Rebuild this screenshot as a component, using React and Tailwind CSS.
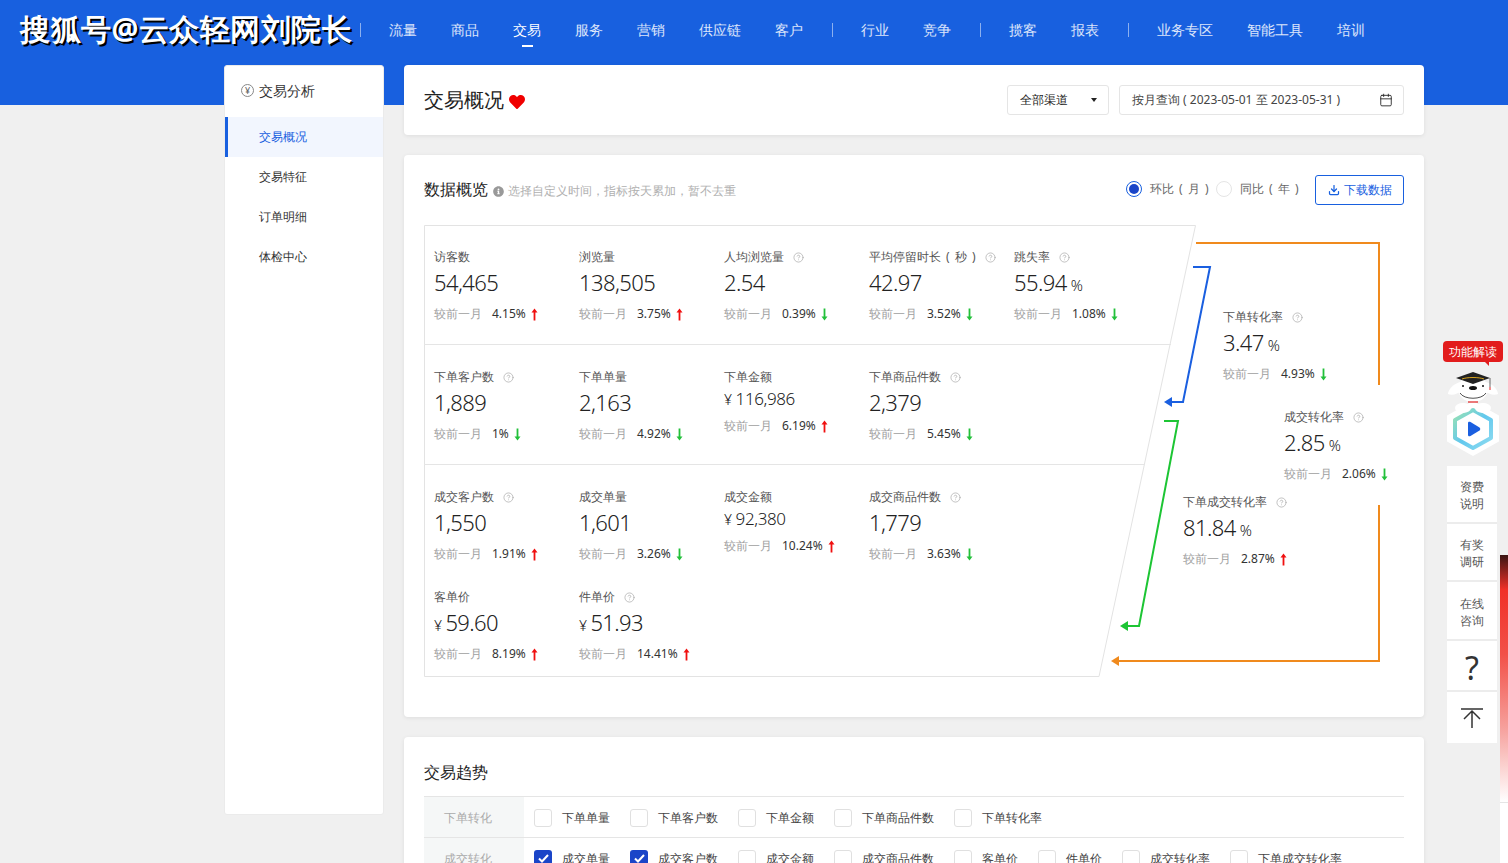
import React from "react";
import { Calendar, CircleHelp, Download } from "lucide-react";
import { FaHeart, FaInfoCircle } from "react-icons/fa";

const navGroups = [
  ["流量", "商品", "交易", "服务", "营销", "供应链", "客户"],
  ["行业", "竞争"],
  ["揽客", "报表"],
  ["业务专区", "智能工具", "培训"],
];

const UP = "up";
const DOWN = "down";

const rows = [
  {
    width: "w-[747px] border-b border-[#e5e5e5]",
    items: [
      { label: "访客数", value: "54,465", pct: "4.15%", dir: UP },
      { label: "浏览量", value: "138,505", pct: "3.75%", dir: UP },
      { label: "人均浏览量", help: true, value: "2.54", pct: "0.39%", dir: DOWN },
      { label: "平均停留时长 ( 秒 )", help: true, value: "42.97", pct: "3.52%", dir: DOWN },
      { label: "跳失率", help: true, value: "55.94", unit: "%", pct: "1.08%", dir: DOWN },
    ],
  },
  {
    width: "w-[721px] border-b border-[#e5e5e5]",
    items: [
      { label: "下单客户数", help: true, value: "1,889", pct: "1%", dir: DOWN },
      { label: "下单单量", value: "2,163", pct: "4.92%", dir: DOWN },
      { label: "下单金额", money: true, value: "116,986", pct: "6.19%", dir: UP },
      { label: "下单商品件数", help: true, value: "2,379", pct: "5.45%", dir: DOWN },
    ],
  },
  {
    width: "w-[700px]",
    items: [
      { label: "成交客户数", help: true, value: "1,550", pct: "1.91%", dir: UP },
      { label: "成交单量", value: "1,601", pct: "3.26%", dir: DOWN },
      { label: "成交金额", money: true, value: "92,380", pct: "10.24%", dir: UP },
      { label: "成交商品件数", help: true, value: "1,779", pct: "3.63%", dir: DOWN },
    ],
  },
  {
    width: "w-[600px]",
    items: [
      { label: "客单价", prefix: "¥", value: "59.60", pct: "8.19%", dir: UP },
      { label: "件单价", help: true, prefix: "¥", value: "51.93", pct: "14.41%", dir: UP },
    ],
  },
];

const checkRows = [
  {
    name: "下单转化",
    items: [
      { t: "下单单量" },
      { t: "下单客户数" },
      { t: "下单金额" },
      { t: "下单商品件数" },
      { t: "下单转化率" },
    ],
  },
  {
    name: "成交转化",
    items: [
      { t: "成交单量", on: true },
      { t: "成交客户数", on: true },
      { t: "成交金额" },
      { t: "成交商品件数" },
      { t: "客单价" },
      { t: "件单价" },
      { t: "成交转化率" },
      { t: "下单成交转化率" },
    ],
  },
];

const Arrow = ({ dir }) => (
  <svg width="7" height="13" viewBox="0 0 7 13" className="ml-[5px] shrink-0">
    {dir === UP ? (
      <path d="M3.5 0.5 L6.5 4.5 H4.4 V12.5 H2.6 V4.5 H0.5 Z" fill="#f01010" />
    ) : (
      <path d="M3.5 12.5 L6.5 8.5 H4.4 V0.5 H2.6 V8.5 H0.5 Z" fill="#22c03a" />
    )}
  </svg>
);

const Help = () => <CircleHelp size={11} strokeWidth={1.5} className="ml-[9px] text-[#a8a8a8]" />;

const Compare = ({ pct, dir, className = "" }) => (
  <div className={`flex h-[18px] items-center text-[12px] ${className}`}>
    <span className="text-[#a0a0a0]">较前一月</span>
    <span className="ml-[10px] text-[#333]">{pct}</span>
    <Arrow dir={dir} />
  </div>
);

const Metric = ({ m }) => (
  <div className="w-[145px] shrink-0">
    <div className="flex h-[18px] items-center whitespace-pre text-[12px] text-[#555] [word-spacing:2px]">
      {m.label}
      {m.help && <Help />}
    </div>
    {m.money ? (
      <>
        <div className="h-[26px] text-[17px] font-light leading-[26px] tracking-[-0.4px] text-[#222]">
          <span className="mr-[4px] text-[14px]">¥</span>
          {m.value}
        </div>
        <Compare pct={m.pct} dir={m.dir} className="mt-[5px]" />
      </>
    ) : (
      <>
        <div className="mt-[1px] h-[30px] text-[22px] font-light leading-[30px] tracking-[-0.6px] text-[#222]">
          {m.prefix && <span className="mr-[4px] text-[14px]">{m.prefix}</span>}
          {m.value}
          {m.unit && <span className="ml-[4px] text-[15px]">{m.unit}</span>}
        </div>
        <Compare pct={m.pct} dir={m.dir} className="mt-[8px]" />
      </>
    )}
  </div>
);

const Rate = ({ className, label, value, pct, dir }) => (
  <div className={`absolute bg-white ${className}`}>
    <div className="flex h-[18px] items-center text-[12px] text-[#555]">
      {label}
      <Help />
    </div>
    <div className="mt-[1px] h-[30px] text-[22px] font-light leading-[30px] tracking-[-0.6px] text-[#222]">
      {value}
      <span className="ml-[4px] text-[15px]">%</span>
    </div>
    <Compare pct={pct} dir={dir} className="mt-[8px]" />
  </div>
);

// outline of the funnel and the three conversion arrows
const FunnelLines = () => (
  <svg className="absolute left-0 top-0 overflow-visible" width="980" height="452" fill="none">
    <path d="M0.5 0.5 H771.5 L675 451.5 H0.5 Z" stroke="#e3e3e3" />
    <path d="M772 18 H955 V160 M955 280 V436 H694" stroke="#f08a1d" strokeWidth="2" />
    <path d="M687 436 L695 431 V441 Z" fill="#f08a1d" />
    <path d="M769 42 H786 L759 177 H746" stroke="#1a5fe0" strokeWidth="2" />
    <path d="M740 177 L748 172 V182 Z" fill="#1a5fe0" />
    <path d="M740 196 H754 L715 401 H703" stroke="#1dc534" strokeWidth="2" />
    <path d="M696 401 L704 396 V406 Z" fill="#1dc534" />
  </svg>
);

const Mascot = () => (
  <svg width="60" height="86" viewBox="0 0 60 86">
    <defs>
      <linearGradient id="hexBorder" x1="0" y1="0" x2="1" y2="1">
        <stop offset="0" stopColor="#9be3b0" />
        <stop offset="0.5" stopColor="#62c8ee" />
        <stop offset="1" stopColor="#8fdcf0" />
      </linearGradient>
    </defs>
    <path d="M30 31 L55 45 V70 L30 84 L5 70 V45 Z" fill="#fff" stroke="#fff" strokeWidth="2" strokeLinejoin="round" />
    <path d="M30 39 L48 49 V67 L30 77 L12 67 V49 Z" fill="#fff" stroke="url(#hexBorder)" strokeWidth="4" strokeLinejoin="round" />
    <path d="M25 52 C25 50.5 26.5 50.5 27.5 51 L36.5 56.5 C37.5 57.5 37.5 58.5 36.5 59.5 L27.5 65 C26.5 65.5 25 65.5 25 64 Z" fill="#1a5fe0" />
    <path d="M17 11 C10 13 5 19 5 23 C9 25 15 23 19 19 Z" fill="#fff" />
    <path d="M43 11 C50 13 55 19 55 23 C51 25 45 23 41 19 Z" fill="#fff" />
    <ellipse cx="30" cy="18" rx="15" ry="13" fill="#fff" />
    <path d="M17 22 C21 29 39 29 43 22" stroke="#222" strokeWidth="0.8" fill="none" />
    <ellipse cx="30" cy="17" rx="4" ry="2" fill="#111" />
    <circle cx="20" cy="15" r="1" fill="#111" />
    <circle cx="40" cy="15" r="1" fill="#111" />
    <path d="M25 31 H35" stroke="#e02020" strokeWidth="1.2" />
    <path d="M30 1 L47 7 L30 13 L13 7 Z" fill="#222" />
    <path d="M19 8 C24 6 36 6 41 8" stroke="#d9a520" strokeWidth="1" fill="none" />
    <path d="M47 7 V16" stroke="#444" strokeWidth="0.8" />
    <path d="M46.5 16 H47.5 V19 H46.5 Z" fill="#e02020" />
    <ellipse cx="20" cy="37" rx="8" ry="5" fill="#fff" />
    <ellipse cx="40" cy="37" rx="8" ry="5" fill="#fff" />
  </svg>
);

export default function App() {
  return (
    <div className="relative h-[863px] w-[1508px] overflow-hidden bg-[#f0f0f0] font-['Noto_Sans_CJK_SC',sans-serif]">
      {/* header */}
      <div className="relative h-[105px] bg-[#1860df]">
        <div className="flex h-[59px] items-center pl-[360px] text-[14px] text-white/85">
          {navGroups.map((group, i) => (
            <React.Fragment key={i}>
              <span className="mr-[28px] h-[14px] w-px bg-white/50" />
              <div className="mr-[29px] flex gap-[34px]">
                {group.map((item) => (
                  <span key={item} className={`relative ${item === "交易" ? "font-medium text-white" : ""}`}>
                    {item}
                    {item === "交易" && (
                      <span className="absolute -bottom-[7px] left-[9px] h-[2px] w-[11px] bg-white" />
                    )}
                  </span>
                ))}
              </div>
            </React.Fragment>
          ))}
        </div>
        <div className="absolute left-[20px] top-[7px] whitespace-nowrap text-[30px] font-bold leading-[44px] tracking-[0.5px] text-white [text-shadow:2px_2px_0_#000]">
          搜狐号@云众轻网刘院长
        </div>
      </div>

      {/* page body */}
      <div className="relative -mt-[40px] ml-[224px] flex w-[1200px] gap-[20px]">
        <aside className="h-[750px] w-[160px] shrink-0 rounded-[3px] border border-[#ebebeb] bg-white">
          <div className="flex h-[51px] items-center pb-[2px] pl-[16px] text-[14px] text-[#333]">
            <span className="mr-[5px] flex h-[13px] w-[13px] items-center justify-center rounded-full border border-[#888] text-[9px] leading-none text-[#666]">
              ¥
            </span>
            交易分析
          </div>
          <div className="flex h-[40px] items-center border-l-[3px] border-[#1860df] bg-[#f2f6fe] pl-[31px] text-[12px] text-[#1860df]">
            交易概况
          </div>
          {["交易特征", "订单明细", "体检中心"].map((item) => (
            <div key={item} className="flex h-[40px] items-center pl-[34px] text-[12px] text-[#333]">
              {item}
            </div>
          ))}
        </aside>

        <main className="w-[1020px] shrink-0">
          {/* title card */}
          <div className="flex h-[70px] items-center rounded-[4px] bg-white px-[20px] shadow-[0_1px_4px_rgba(0,0,0,0.08)]">
            <h1 className="text-[20px] font-light text-[#222]">交易概况</h1>
            <FaHeart size={16} className="ml-[5px] mt-[3px] text-[#f00000]" />
            <div className="ml-auto flex h-[30px] w-[102px] items-center rounded-[3px] border border-[#e5e5e5] pl-[12px] pr-[11px] text-[12px] text-[#222]">
              全部渠道
              <span className="ml-auto h-0 w-0 border-x-[3.5px] border-t-[4px] border-x-transparent border-t-[#222]" />
            </div>
            <div className="ml-[10px] flex h-[30px] w-[285px] items-center whitespace-pre rounded-[3px] border border-[#e5e5e5] pl-[12px] pr-[10px] text-[12px] text-[#444]">
              按月查询 ( 2023-05-01 至 2023-05-31 )
              <Calendar size={14} strokeWidth={1.5} className="ml-auto text-[#222]" />
            </div>
          </div>

          {/* overview card */}
          <div className="mt-[20px] h-[562px] rounded-[4px] bg-white px-[20px] pt-[20px] shadow-[0_1px_4px_rgba(0,0,0,0.08)]">
            <div className="flex h-[30px] items-center">
              <h2 className="pb-[3px] text-[16px] font-light text-[#222]">数据概览</h2>
              <FaInfoCircle size={11} className="ml-[5px] mt-[2px] text-[#999]" />
              <span className="ml-[4px] mt-[2px] text-[12px] text-[#b0b0b0]">选择自定义时间，指标按天累加，暂不去重</span>
              <span className="mb-[2px] ml-auto flex h-[16px] w-[16px] items-center justify-center rounded-full border border-[#1860df]">
                <span className="h-[10px] w-[10px] rounded-full bg-[#1a45c8]" />
              </span>
              <span className="mb-[2px] ml-[8px] w-[57px] whitespace-pre text-[12px] text-[#666] [word-spacing:2px]">环比 ( 月 )</span>
              <span className="mb-[2px] ml-[9px] h-[16px] w-[16px] rounded-full border border-[#e5e5e5]" />
              <span className="mb-[2px] ml-[8px] w-[57px] whitespace-pre text-[12px] text-[#666] [word-spacing:2px]">同比 ( 年 )</span>
              <button className="ml-[18px] flex h-[30px] w-[89px] items-center justify-center rounded-[3px] border border-[#1860df] text-[12px] text-[#1860df]">
                <Download size={12} strokeWidth={2.5} className="mr-[4px]" />
                下载数据
              </button>
            </div>

            <div className="relative mt-[20px] h-[452px]">
              <FunnelLines />
              {rows.map((row, i) => (
                <div key={i} className={`relative flex pl-[10px] pt-[23px] ${row.width} ${i === 2 ? "h-[100px]" : i === 3 ? "h-[112px]" : "h-[120px]"}`}>
                  {row.items.map((m) => (
                    <Metric key={m.label} m={m} />
                  ))}
                </div>
              ))}
              <Rate className="left-[799px] top-[83px] pr-[8px]" label="下单转化率" value="3.47" pct="4.93%" dir={DOWN} />
              <Rate className="left-[860px] top-[183px] w-[120px]" label="成交转化率" value="2.85" pct="2.06%" dir={DOWN} />
              <Rate className="left-[759px] top-[268px]" label="下单成交转化率" value="81.84" pct="2.87%" dir={UP} />
            </div>
          </div>

          {/* trend card */}
          <div className="mt-[20px] rounded-[4px] bg-white px-[20px] shadow-[0_1px_4px_rgba(0,0,0,0.08)]">
            <h2 className="flex h-[59px] items-end pb-[12px] text-[16px] font-light text-[#222]">交易趋势</h2>
            <div className="border-t border-[#e5e5e5]">
              {checkRows.map((row) => (
                <div key={row.name} className="flex h-[41px] border-b border-[#e5e5e5]">
                  <div className="flex w-[100px] items-center bg-[#f5f7f7] pl-[20px] pt-px text-[12px] text-[#aaa]">
                    {row.name}
                  </div>
                  <div className="flex items-center gap-[20px] pl-[10px] pt-px">
                    {row.items.map((c) => (
                      <label key={c.t} className="flex items-center gap-[10px] text-[12px] text-[#444]">
                        {c.on ? (
                          <span className="flex h-[18px] w-[18px] items-center justify-center rounded-[3px] bg-[#1a45c8]">
                            <svg width="11" height="9" viewBox="0 0 11 9" fill="none">
                              <path d="M1 4.5 L4 7.5 L10 1" stroke="#fff" strokeWidth="2" />
                            </svg>
                          </span>
                        ) : (
                          <span className="h-[18px] w-[18px] rounded-[3px] border border-[#e0e0e0]" />
                        )}
                        {c.t}
                      </label>
                    ))}
                  </div>
                </div>
              ))}
            </div>
          </div>
        </main>
      </div>

      {/* floating helpers */}
      <div className="absolute left-[1443px] top-[341px] flex h-[21px] w-[60px] items-center justify-center rounded-[4px] bg-[#e21c1c] text-[12px] text-white">
        功能解读
        <span className="absolute -bottom-[4px] right-[14px] h-0 w-0 border-l-[5px] border-t-[5px] border-l-transparent border-t-[#e21c1c]" />
      </div>
      <div className="absolute left-[1443px] top-[371px]">
        <Mascot />
      </div>
      <div className="absolute left-[1447px] top-[466px] w-[50px] divide-y-2 divide-[#ececec] bg-white text-center text-[12px] leading-[17px] text-[#555]">
        <div className="flex h-[58px] items-center justify-center pt-[2px]">资费<br />说明</div>
        <div className="flex h-[58px] items-center justify-center pt-[2px]">有奖<br />调研</div>
        <div className="flex h-[59px] items-center justify-center pt-[2px]">在线<br />咨询</div>
        <div className="flex h-[51px] items-center justify-center pt-[3px] text-[32px] text-[#333]">?</div>
        <div className="flex h-[51px] items-center justify-center">
          <svg width="22" height="20" viewBox="0 0 22 20" fill="none" stroke="#333" strokeWidth="1.5">
            <path d="M0 1 H22 M11 20 V3 M3 11 L11 3 L19 11" />
          </svg>
        </div>
      </div>
      <div className="absolute left-[1500px] top-[555px] h-[247px] w-[8px] bg-[linear-gradient(to_bottom,#3a1412_0%,#f03028_14%,#f25048_40%,#f6a09c_70%,#ffffff_100%)]" />
      <div className="absolute left-[1500px] top-[802px] h-[61px] w-[8px] border-t border-[#e5e5e5] bg-white" />
    </div>
  );
}
